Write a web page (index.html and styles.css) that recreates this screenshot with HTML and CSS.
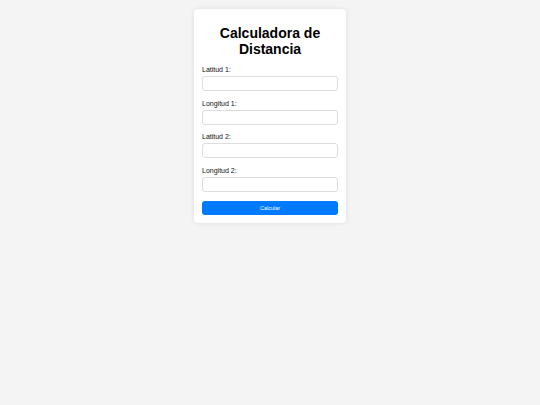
FILE: index.html
```html
<!DOCTYPE html>
<html lang="es">
<head>
    <meta charset="UTF-8">
    <meta name="viewport" content="width=device-width, initial-scale=1.0">
    <title>Calculadora de Distancia</title>
    <link rel="stylesheet" href="styles.css">
</head>
<body>
    <div class="container">
        <h1>Calculadora de Distancia</h1>
        <form id="distanceForm" onsubmit="return false;">
            <div class="field">
                <label for="lat1">Latitud 1:</label>
                <input type="text" id="lat1">
            </div>
            <div class="field">
                <label for="lon1">Longitud 1:</label>
                <input type="text" id="lon1">
            </div>
            <div class="field">
                <label for="lat2">Latitud 2:</label>
                <input type="text" id="lat2">
            </div>
            <div class="field">
                <label for="lon2">Longitud 2:</label>
                <input type="text" id="lon2">
            </div>
            <button type="submit">Calcular</button>
        </form>
    </div>
</body>
</html>
```

FILE: styles.css
```css
/* página */
body {
    margin: 0;
    padding: 9px 0;
    background-color: #f4f4f4;
    font-family: "Liberation Sans", Arial, sans-serif;
}

/* tarjeta */
.container {
    width: 152px;
    box-sizing: border-box;
    margin: 0 auto;
    padding: 8px;
    background-color: #fff;
    border-radius: 4px;
    box-shadow: 0 0 5px rgba(0, 0, 0, 0.1);
}

h1 {
    font-size: 14px;
    line-height: 15.5px;
    text-align: center;
    margin: 9px 0 8px;
    color: #000;
}

/* campos */
.field {
    margin-bottom: 7.5px;
}

label {
    display: block;
    font-size: 7px;
    line-height: 10px;
    color: #111;
    margin-bottom: 1px;
}

input {
    display: block;
    width: 100%;
    box-sizing: border-box;
    height: 15px;
    padding: 2px 4px;
    border: 1px solid #ddd;
    border-radius: 3px;
    font-size: 7px;
}

button {
    display: block;
    width: 100%;
    height: 14px;
    margin-top: 9px;
    padding: 0;
    border: none;
    border-radius: 3px;
    background-color: #007bff;
    color: #fff;
    font-family: "Liberation Sans", Arial, sans-serif;
    font-size: 5.5px;
    cursor: pointer;
}
```
